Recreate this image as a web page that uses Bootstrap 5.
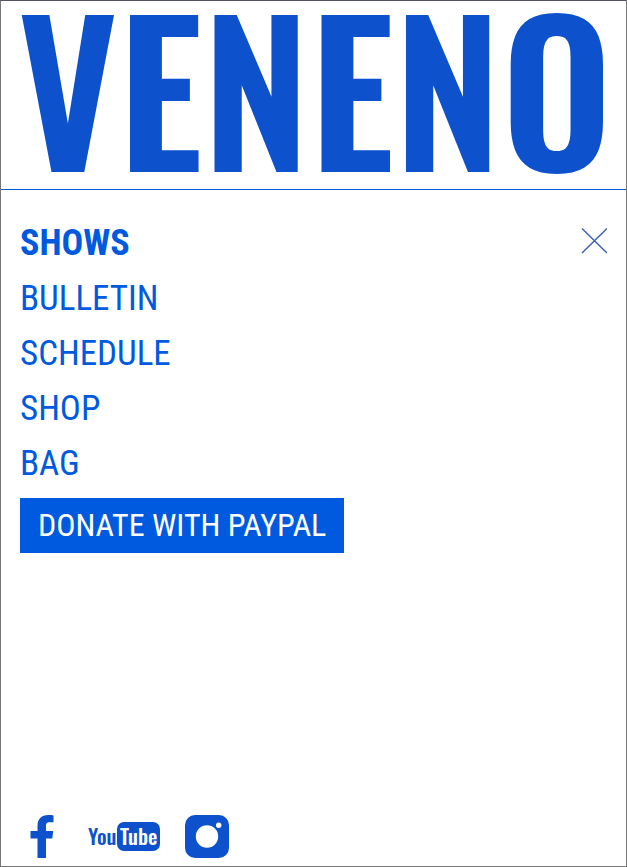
<!DOCTYPE html>
<html lang="en">
<head>
<meta charset="utf-8">
<meta name="viewport" content="width=device-width, initial-scale=1">
<title>Veneno</title>
<link href="https://cdn.jsdelivr.net/npm/bootstrap@5.3.0/dist/css/bootstrap.min.css" rel="stylesheet">
<style>
:root { --ink: #0d52cc; --link: #005adf; }
body { font-family: "Roboto Condensed", "Liberation Sans Narrow", "Liberation Sans", sans-serif; }
.page { border: 1px solid #777; border-top-color: #555060; }
.masthead { border-bottom: 1px solid var(--link); padding: 0 19px; }
.wordmark { display: block; width: 100%; height: auto; overflow: visible; }
.wordmark text { font-family: Oswald, "Roboto Condensed", sans-serif; font-weight: 600; font-size: 193px; fill: var(--ink); }
.menu-area { padding: 26px 19px 0; }
.menu-link { color: var(--link); font-size: 35px; line-height: 55px; padding: 0; }
.menu-link:hover { color: var(--ink); }
.menu-link.active { font-size: 36px; font-weight: 700; }
.donate { background: var(--link); color: #fff; font-size: 32px; font-weight: 400; line-height: 55px; margin-top: 7px; padding: 0 18px; border: 0; border-radius: 0; }
.close-menu { margin-top: 10px; border: 0; line-height: 0; }
.social { padding: 0 29px 8px; }
.social svg { display: block; }
.tube text { font-family: Oswald, "Roboto Condensed", sans-serif; font-size: 21px; font-weight: 500; }
</style>
<script src="https://cdn.jsdelivr.net/npm/bootstrap@5.3.0/dist/js/bootstrap.bundle.min.js"></script>
</head>
<body>
<div class="page d-flex flex-column min-vh-100 bg-white">
  <header class="masthead">
    <a href="#" class="d-block" aria-label="Veneno home">
      <svg class="wordmark" viewBox="0 0 587 188"><text x="295" y="171" text-anchor="middle">VENENO</text></svg>
    </a>
  </header>
  <div class="menu-area d-flex justify-content-between align-items-start">
    <nav class="nav flex-column align-items-start" aria-label="Main">
      <a class="nav-link menu-link active" href="#" aria-current="page">SHOWS</a>
      <a class="nav-link menu-link" href="#">BULLETIN</a>
      <a class="nav-link menu-link" href="#">SCHEDULE</a>
      <a class="nav-link menu-link" href="#">SHOP</a>
      <a class="nav-link menu-link" href="#">BAG</a>
      <button type="submit" class="btn donate">DONATE WITH PAYPAL</button>
    </nav>
    <button type="button" class="close-menu bg-transparent p-0" aria-label="Close menu">
      <svg width="26" height="28" viewBox="0 0 26 28" fill="none" stroke="#3c62b4" stroke-width="1.5"><path d="M1 2.500 26 27M26 2.500 1 27"/></svg>
    </button>
  </div>
  <footer class="social d-flex align-items-center mt-auto">
    <a href="#" aria-label="Facebook">
      <svg width="25" height="43" viewBox="0 0 25 43" fill="#0d52cc"><path d="M7.500 43V23.500H.5V16H7.500V11C7.500 3.500 12 0 18 0 20.500 0 22.500.2 23.500.4V7.300H19.500C16.500 7.300 16 9 16 11V16H23.200L22.300 23.500H16V43Z"/></svg>
    </a>
    <a href="#" class="ms-4 ps-2 text-decoration-none" aria-label="YouTube">
      <svg class="tube" width="74" height="32" viewBox="0 0 74 32"><rect x="30" y="1" width="43" height="29" rx="7" fill="#0d52cc"/><text x="1" y="24" fill="#0d52cc">You</text><text x="33" y="24" fill="#fff">Tube</text></svg>
    </a>
    <a href="#" class="ms-4" aria-label="Instagram">
      <svg width="44" height="43" viewBox="0 0 44 43"><rect width="44" height="43" rx="10" fill="#0d52cc"/><circle cx="22" cy="21.500" r="11.200" fill="#fff"/><circle cx="33.700" cy="10.200" r="2.700" fill="#fff"/></svg>
    </a>
  </footer>
</div>
</body>
</html>
